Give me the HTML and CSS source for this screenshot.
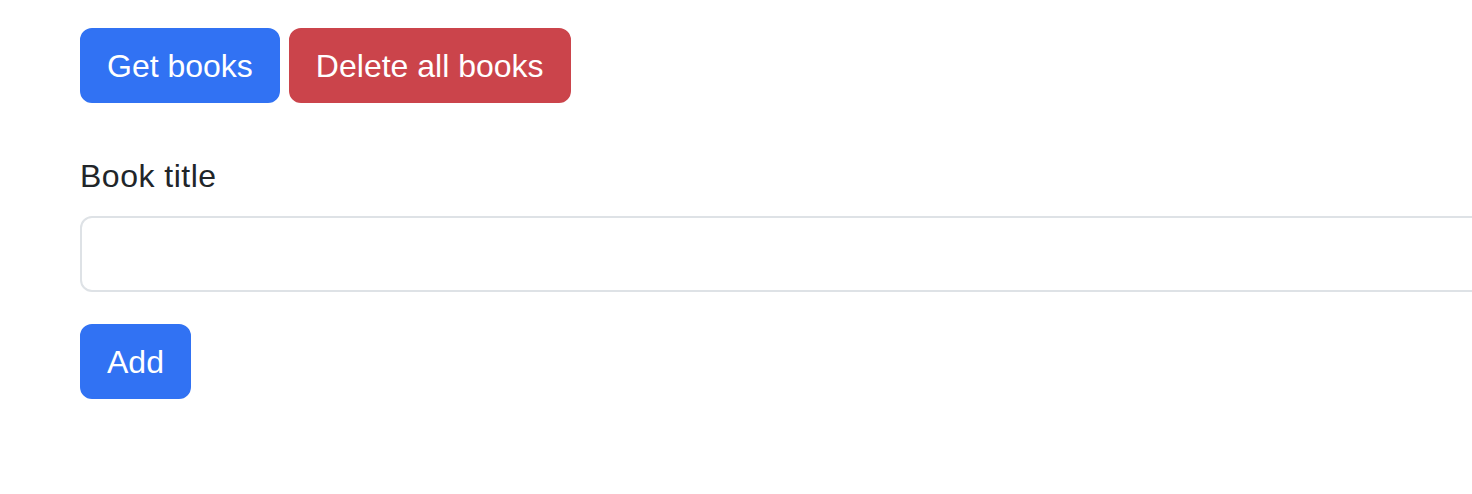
FILE: index.html
```html
<!DOCTYPE html>
<html lang="en">
<head>
    <meta charset="UTF-8">
    <meta name="viewport" content="width=device-width, initial-scale=1.0">
    <title>Books</title>
    <link rel="stylesheet" href="styles.css">
</head>
<body>
    <div class="container">
        <div class="actions">
            <button class="btn btn-primary" id="getBooks">Get books</button>
            <button class="btn btn-danger" id="deleteBooks">Delete all books</button>
        </div>

        <form class="book-form" onsubmit="return false">
            <label for="bookTitle" class="form-label">Book title</label>
            <input type="text" id="bookTitle" class="form-control">
            <button class="btn btn-primary" type="submit">Add</button>
        </form>
    </div>
</body>
</html>
```

FILE: styles.css
```css
body {
    margin: 0;
    font-family: 'Liberation Sans', Arial, sans-serif;
    color: #212529;
    background: #fff;
    overflow: hidden;
}

.container {
    padding: 28px 0 0 80px;
    width: 1500px;
}

.actions {
    display: flex;
    gap: 9px;
}

.btn {
    font-family: inherit;
    font-size: 32px;
    line-height: 47px;
    padding: 13px 25px 11px;
    border: 2px solid transparent;
    border-radius: 12px;
    color: #fff;
    cursor: pointer;
}

.btn-primary {
    background: #3172f3;
    border-color: #3172f3;
}

.btn-danger {
    background: #cb444b;
    border-color: #cb444b;
}

.book-form {
    display: flex;
    flex-direction: column;
    align-items: flex-start;
    margin-top: 49px;
}

.form-label {
    font-size: 32px;
    line-height: 48px;
    letter-spacing: 0.5px;
    margin-bottom: 16px;
}

.form-control {
    box-sizing: border-box;
    width: 100%;
    height: 76px;
    font-family: inherit;
    font-size: 32px;
    padding: 12px 24px;
    border: 2px solid #dee2e6;
    border-radius: 12px;
    margin-bottom: 32px;
    outline: none;
}
```
